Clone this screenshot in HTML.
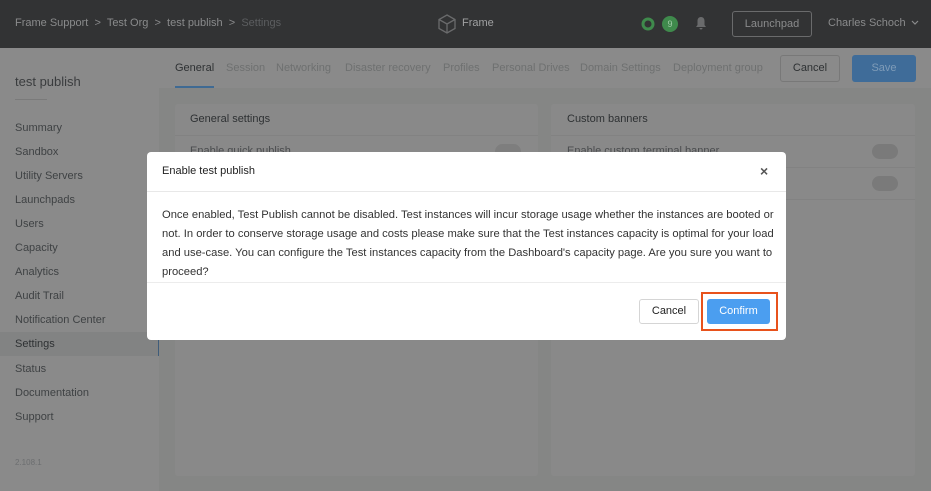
<!DOCTYPE html>
<html><head><meta charset="utf-8"><style>
*{margin:0;padding:0;box-sizing:border-box}
body{width:931px;height:491px;overflow:hidden;background:#858685;font-family:"Liberation Sans",sans-serif;position:relative}
.a{position:absolute}
.top{left:0;top:0;width:931px;height:48px;background:#323334}
.tb{color:#8a8b8c;font-size:11px;top:17px;white-space:nowrap}
.side{left:0;top:48px;width:159px;height:443px;background:#8a8a8a}
.side .it{position:absolute;left:15px;font-size:11px;color:#3f4244}
.tabs{left:159px;top:48px;width:772px;height:40px;background:#8a8a8a}
.tab{position:absolute;top:14px;font-size:11px;color:#6e7070;white-space:nowrap}
.card{background:#898989;border-radius:3px}
.modal{left:147px;top:152px;width:639px;height:188px;background:#fff;border-radius:4px}
</style></head><body>
<div class="a top"></div>
<div class="a tb" style="left:15px">Frame Support &nbsp;&gt;&nbsp; Test Org &nbsp;&gt;&nbsp; test publish &nbsp;&gt;&nbsp; <span style="color:#5c5e60">Settings</span></div>
<svg class="a" style="left:438px;top:14px" width="18" height="20" viewBox="0 0 18 20"><path d="M9 1L17 5.5V14.5L9 19L1 14.5V5.5Z M1 5.5L9 10L17 5.5 M9 10V19" fill="none" stroke="#6a6b6c" stroke-width="1.3"/></svg>
<div class="a tb" style="left:462px;color:#a0a1a2">Frame</div>
<svg class="a" style="left:641px;top:17px" width="14" height="14"><circle cx="7" cy="7" r="5" fill="none" stroke="#3f8a4c" stroke-width="3"/></svg>
<div class="a" style="left:662px;top:16px;width:16px;height:16px;border-radius:8px;background:#3f8a4c;color:#9fc9a6;font-size:9px;text-align:center;line-height:16px">9</div>
<svg class="a" style="left:695px;top:16px" width="12" height="14" viewBox="0 0 12 14"><path d="M6 1C3.5 1 2.5 3 2.5 5V9L1 11H11L9.5 9V5C9.5 3 8.5 1 6 1Z M4.5 12H7.5A1.5 1.5 0 0 1 4.5 12Z" fill="#6a6b6c"/></svg>
<div class="a" style="left:732px;top:11px;width:80px;height:26px;border:1px solid #6a6b6c;border-radius:3px;color:#8a8b8c;font-size:11px;text-align:center;line-height:24px">Launchpad</div>
<div class="a tb" style="left:828px">Charles Schoch <svg width="8" height="6" style="margin-left:2px"><path d="M1 1L4 4L7 1" fill="none" stroke="#8a8b8c" stroke-width="1.2"/></svg></div>

<div class="a side">
<div class="a" style="left:15px;top:26px;font-size:13px;color:#3a3c3e">test publish</div>
<div class="a" style="left:15px;top:51px;width:32px;height:1px;background:#7a7a7a"></div>
<div class="it" style="top:74px">Summary</div>
<div class="it" style="top:98px">Sandbox</div>
<div class="it" style="top:122px">Utility Servers</div>
<div class="it" style="top:146px">Launchpads</div>
<div class="it" style="top:170px">Users</div>
<div class="it" style="top:194px">Capacity</div>
<div class="it" style="top:218px">Analytics</div>
<div class="it" style="top:242px">Audit Trail</div>
<div class="it" style="top:266px">Notification Center</div>
<div class="a" style="left:0;top:284px;width:159px;height:24px;background:#828383;border-right:1px solid #3f5c7a"></div>
<div class="it" style="top:290px;color:#2e3133">Settings</div>
<div class="it" style="top:315px">Status</div>
<div class="it" style="top:339px">Documentation</div>
<div class="it" style="top:363px">Support</div>
<div class="it" style="top:410px;font-size:8px;color:#6c6e70">2.108.1</div>
</div>

<div class="a tabs">
<div class="tab" style="left:16px;color:#2e3133">General</div>
<div class="a" style="left:16px;top:38px;width:39px;height:2px;background:#3f6a93"></div>
<div class="tab" style="left:67px">Session</div>
<div class="tab" style="left:117px">Networking</div>
<div class="tab" style="left:186px">Disaster recovery</div>
<div class="tab" style="left:284px">Profiles</div>
<div class="tab" style="left:333px">Personal Drives</div>
<div class="tab" style="left:421px">Domain Settings</div>
<div class="tab" style="left:514px">Deployment group</div>
<div class="a" style="left:621px;top:7px;width:60px;height:27px;border:1px solid #787878;border-radius:3px;font-size:11px;color:#2e3133;text-align:center;line-height:25px">Cancel</div>
<div class="a" style="left:693px;top:7px;width:64px;height:27px;background:#3f6c99;border-radius:3px;font-size:11px;color:#7f9cb8;text-align:center;line-height:27px">Save</div>
</div>

<div class="a card" style="left:175px;top:104px;width:363px;height:372px"></div>
<div class="a" style="left:175px;top:135px;width:363px;height:1px;background:#828282"></div>
<div class="a" style="left:190px;top:113px;font-size:11px;color:#2e3133">General settings</div>
<div class="a" style="left:190px;top:145px;font-size:11px;color:#4a4c4e">Enable quick publish</div>
<div class="a" style="left:495px;top:144px;width:26px;height:15px;border-radius:8px;background:#7e7e7e"></div>

<div class="a card" style="left:551px;top:104px;width:364px;height:372px"></div>
<div class="a" style="left:551px;top:135px;width:364px;height:1px;background:#828282"></div>
<div class="a" style="left:551px;top:167px;width:364px;height:1px;background:#828282"></div>
<div class="a" style="left:551px;top:199px;width:364px;height:1px;background:#828282"></div>
<div class="a" style="left:567px;top:113px;font-size:11px;color:#2e3133">Custom banners</div>
<div class="a" style="left:567px;top:145px;font-size:11px;color:#4a4c4e">Enable custom terminal banner</div>
<div class="a" style="left:872px;top:144px;width:26px;height:15px;border-radius:8px;background:#7a7a7a"></div>
<div class="a" style="left:872px;top:176px;width:26px;height:15px;border-radius:8px;background:#7a7a7a"></div>

<div class="a modal">
<div class="a" style="left:15px;top:13px;font-size:11px;color:#222">Enable test publish</div>
<div class="a" style="left:613px;top:11px;font-size:14px;color:#555;font-weight:bold">×</div>
<div class="a" style="left:0;top:39px;width:639px;height:1px;background:#e8e8e8"></div>
<div class="a" style="left:15px;top:54px;font-size:11.2px;line-height:19px;color:#333;white-space:nowrap">Once enabled, Test Publish cannot be disabled. Test instances will incur storage usage whether the instances are booted or<br>not. In order to conserve storage usage and costs please make sure that the Test instances capacity is optimal for your load<br>and use-case. You can configure the Test instances capacity from the Dashboard's capacity page. Are you sure you want to<br>proceed?</div>
<div class="a" style="left:0;top:130px;width:639px;height:1px;background:#ececec"></div>
<div class="a" style="left:492px;top:147px;width:60px;height:25px;border:1px solid #d5d5d5;border-radius:3px;font-size:11px;color:#222;text-align:center;line-height:23px">Cancel</div>
<div class="a" style="left:554px;top:140px;width:77px;height:39px;border:2px solid #e8521c"></div>
<div class="a" style="left:560px;top:147px;width:63px;height:25px;background:#4b9ef0;border-radius:3px;font-size:11px;color:#fff;text-align:center;line-height:25px">Confirm</div>
</div>
</body></html>
